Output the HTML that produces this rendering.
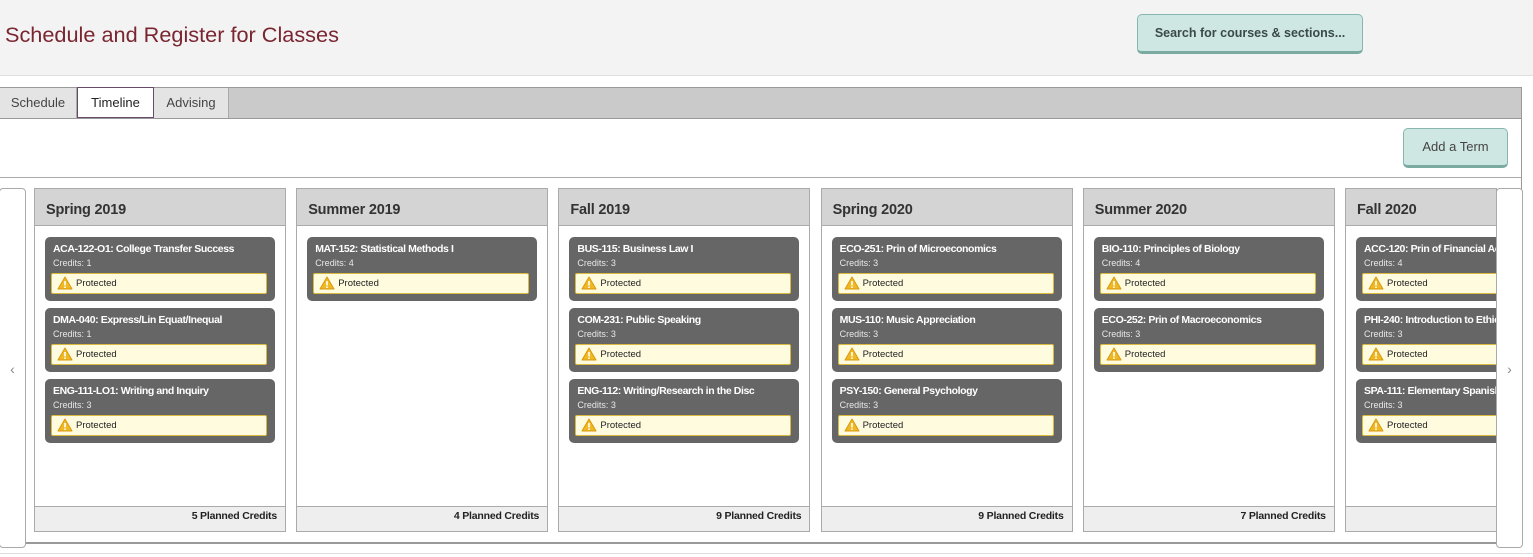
<!DOCTYPE html>
<html><head><meta charset="utf-8"><style>
*{box-sizing:border-box;margin:0;padding:0}
body{width:1533px;height:557px;overflow:hidden;background:#fff;font-family:"Liberation Sans",sans-serif;position:relative}
.hdr{position:absolute;left:0;top:0;width:1533px;height:76px;background:#f3f3f3;border-bottom:1px solid #e0e0e0}
.title{position:absolute;left:5px;top:22px;font-size:21.7px;color:#7a2630}
.btn{position:absolute;background:#cfe7e3;border:1px solid #86b6ae;border-bottom:3px solid #7aaaa2;border-radius:5px;color:#333;font-size:13px;text-align:center}
.tabbar{position:absolute;left:0;top:87px;width:1522px;height:32px;background:#cacaca;border:1px solid #999;border-left:none}
.tab{position:absolute;top:0;height:30px;line-height:30px;font-size:13px;color:#444;text-align:center;background:#e4e4e4;border-right:1px solid #aaa}
.tab.act{background:#fff;border:1px solid #6a4a6a;color:#222;height:31px}
.panel{position:absolute;left:0;top:118px;width:1522px;height:426px;border-right:1px solid #999;border-bottom:2px solid #999}
.tool{position:absolute;left:0;top:0;width:1521px;height:60px;border-bottom:1px solid #aaa}
.col{position:absolute;top:188px;width:252px;height:344px;border:1px solid #aaa;background:#fff}
.ch{height:37px;background:#d4d4d4;border-bottom:1px solid #aaa;font-size:14.5px;font-weight:bold;color:#333;padding:13px 0 0 11px;letter-spacing:-.2px}
.cf{position:absolute;left:0;bottom:0;width:100%;height:25px;background:#eee;border-top:1px solid #aaa;font-size:10.5px;font-weight:bold;text-align:right;padding:3px 8px 0 0;color:#222;letter-spacing:-.2px}
.card{position:absolute;left:10px;width:230px;height:64px;background:#666;border-radius:5px;color:#fff}
.card .n{position:absolute;left:8px;top:6px;font-size:10.5px;font-weight:bold;white-space:nowrap;letter-spacing:-.4px}
.card .c{position:absolute;left:8px;top:21px;font-size:9px;color:#e8e8e8}
.card .p{position:absolute;left:6px;top:36px;width:216px;height:21px;background:#fefbdf;border:1px solid #d9b940;border-radius:2px;color:#222;font-size:9.5px;padding:4px 0 0 24px}
.card .p svg{position:absolute;left:5px;top:2px}
.arrow{position:absolute;top:188px;width:27px;height:360px;background:#fff;border:1px solid #aaa;border-radius:4px;color:#888;font-size:14px;text-align:center;line-height:360px}
</style></head><body>
<div class="hdr"><div class="title">Schedule and Register for Classes</div>
<div class="btn" style="left:1137px;top:14px;width:226px;height:40px;line-height:36px;font-weight:bold;font-size:12.5px;color:#3a4a48">Search for courses &amp; sections...</div></div>
<div class="tabbar">
<div class="tab" style="left:0;width:77px">Schedule</div>
<div class="tab act" style="left:77px;width:77px;top:-1px">Timeline</div>
<div class="tab" style="left:154px;width:75px">Advising</div>
</div>
<div class="panel"><div class="tool"></div>
<div class="btn" style="left:1403px;top:10px;width:105px;height:40px;line-height:36px;color:#444">Add a Term</div></div>
<div class="arrow" style="left:-1px">‹</div>
<div class="arrow" style="left:1496px">›</div>
<div id="cols"></div>
<script>
var terms=[["Spring 2019",5,[["ACA-122-O1: College Transfer Success",1],["DMA-040: Express/Lin Equat/Inequal",1],["ENG-111-LO1: Writing and Inquiry",3]]],
["Summer 2019",4,[["MAT-152: Statistical Methods I",4]]],
["Fall 2019",9,[["BUS-115: Business Law I",3],["COM-231: Public Speaking",3],["ENG-112: Writing/Research in the Disc",3]]],
["Spring 2020",9,[["ECO-251: Prin of Microeconomics",3],["MUS-110: Music Appreciation",3],["PSY-150: General Psychology",3]]],
["Summer 2020",7,[["BIO-110: Principles of Biology",4],["ECO-252: Prin of Macroeconomics",3]]],
["Fall 2020",0,[["ACC-120: Prin of Financial Accounting",4],["PHI-240: Introduction to Ethics",3],["SPA-111: Elementary Spanish I",3]]]];
var w='<svg width="16" height="14" viewBox="0 0 16 14"><path d="M8 1L15 13H1Z" fill="#f0b822" stroke="#d99a10" stroke-width="1" stroke-linejoin="round"/><rect x="7.2" y="5" width="1.6" height="4.5" fill="#fff"/><rect x="7.2" y="10.5" width="1.6" height="1.5" fill="#fff"/></svg>';
var h='';
terms.forEach(function(t,i){
var x=34+i*262.2;
h+='<div class="col" style="left:'+x+'px'+(i==5?';width:152px;overflow:hidden':'')+'"><div class="ch">'+t[0]+'</div>';
t[2].forEach(function(c,j){h+='<div class="card" style="top:'+(48+j*71)+'px"><div class="n">'+c[0]+'</div><div class="c">Credits: '+c[1]+'</div><div class="p">'+w+'Protected</div></div>';});
h+='<div class="cf">'+(t[1]?t[1]+' Planned Credits':'')+'</div></div>';});
document.getElementById('cols').innerHTML=h;
</script>
<div style="position:absolute;left:0;top:553px;width:1533px;height:1px;background:#ddd"></div>
</body></html>
